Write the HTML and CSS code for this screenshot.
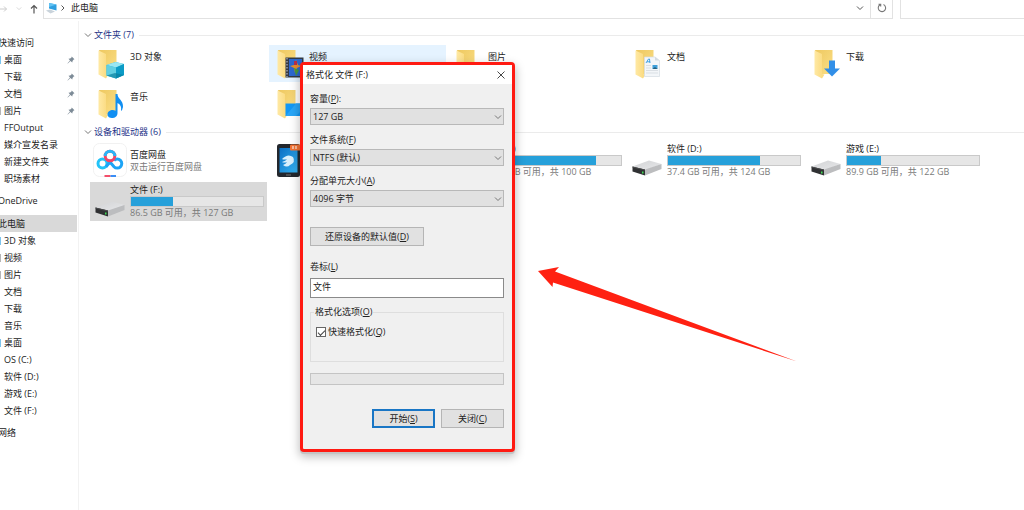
FILE: index.html
```html
<!DOCTYPE html>
<html lang="zh-CN">
<head>
<meta charset="utf-8">
<title>此电脑</title>
<link rel="stylesheet" href="styles.css">
</head>
<body>
<svg class="defs" aria-hidden="true">
  <defs>
    <linearGradient id="g-back" x1="0" y1="0" x2="1" y2="1"><stop offset="0" stop-color="#eec860"/><stop offset="1" stop-color="#fbdf86"/></linearGradient>
    <linearGradient id="g-front" x1="0" y1="0" x2="1" y2="0"><stop offset="0" stop-color="#ffe9a4"/><stop offset="1" stop-color="#fbdc84"/></linearGradient>
    <linearGradient id="g-top" x1="0" y1="0" x2="1" y2="1"><stop offset="0" stop-color="#d2d3d5"/><stop offset="1" stop-color="#e6e7e9"/></linearGradient>
    <linearGradient id="g-phone" x1="0" y1="0" x2="1" y2="1"><stop offset="0" stop-color="#0b6fc4"/><stop offset="1" stop-color="#35b3f2"/></linearGradient>
    <symbol id="folder" viewBox="0 0 30 32">
      <path d="M2 2H19.500V26H8Z" fill="url(#g-back)"/>
      <path d="M1.500 2.500 9 6V30.500L1.500 26.500Z" fill="url(#g-front)"/>
      <path d="M9 26 11.500 26.500 9 30.500Z" fill="#fbdc84"/>
    </symbol>
    <symbol id="drive" viewBox="0 0 30 16">
      <path d="M0.500 6.500 17 .5 29.500 4 15 9.500Z" fill="url(#g-top)"/>
      <path d="M13 9.500 29.500 4V9L13 15.500Z" fill="#bcbdbf"/>
      <path d="M0.500 6.500 13 9.500V15.500L0.500 11.500Z" fill="#303133"/>
      <path d="M0.500 6.500 13 9.500V10.500L0.500 7.500Z" fill="#4b4c4e"/>
      <rect x="10" y="11.500" width="1.500" height="2" fill="#3ddc53"/>
    </symbol>
    <symbol id="down" viewBox="0 0 8 6"><path d="M1 1.500 4 4.500 7 1.500" fill="none" stroke="currentColor" stroke-width="1"/></symbol>
    <symbol id="pin" viewBox="0 0 8 8"><path d="M4.700.5 7.500 3.300 6.700 3.600 5.500 5 5.300 6.500 3.400 4.900.8 7.500.5 7.200 3 4.500 1.500 2.800 3.200 2.600 4.500 1.400Z" fill="#7d8b97"/></symbol>
  </defs>
</svg>

<header class="toolbar">
  <div class="nav-buttons">
    <button class="plain faint" aria-label="前进"><svg width="8" height="10" viewBox="0 0 8 10"><path d="M0 5H6.500M4 2.500 6.500 5 4 7.500" fill="none" stroke="currentColor"/></svg></button>
    <button class="plain faint" aria-label="最近位置"><svg width="6" height="5"><use href="#down"/></svg></button>
    <button class="plain" aria-label="向上"><svg width="8" height="10" viewBox="0 0 8 10"><path d="M4 9.500V1.500M1 4.500 4 1.500 7 4.500" fill="none" stroke="currentColor" stroke-width="1.200"/></svg></button>
  </div>
  <div class="address">
    <svg width="12" height="12" viewBox="0 0 12 12"><path d="M3 1 10.500 2.500V8.500L3 6.500Z" fill="#2f9fe0"/><path d="M3 1 10.500 2.500 3 5Z" fill="#63c3f3"/><path d="M0 8.500 4 7.500 9 9.500 4.500 11.500Z" fill="#c9d3db"/></svg>
    <svg width="6" height="8" viewBox="0 0 6 8"><path d="M1.500 1.500 4 4 1.500 6.500" fill="none" stroke="#555"/></svg>
    <span class="crumb">此电脑</span>
    <button class="plain" aria-label="展开地址"><svg width="8" height="6"><use href="#down"/></svg></button>
  </div>
  <button class="refresh" aria-label="刷新"><svg width="10" height="10" viewBox="0 0 10 10"><path d="M6.500 1.600A3.700 3.700 0 1 1 3 1.800M1.500 1.200H3.700V3.400" fill="none" stroke="#777" stroke-width="1.100"/></svg></button>
  <input class="search" type="text" aria-label="搜索">
</header>

<div class="columns">
  <nav class="sidebar">
    <a class="root" href="#">快速访问</a>
    <a href="#"><i class="edge blue"></i>桌面<svg class="pin"><use href="#pin"/></svg></a>
    <a href="#"><i class="edge"></i>下载<svg class="pin"><use href="#pin"/></svg></a>
    <a href="#"><i class="edge"></i>文档<svg class="pin"><use href="#pin"/></svg></a>
    <a href="#"><i class="edge gray"></i>图片<svg class="pin"><use href="#pin"/></svg></a>
    <a href="#"><i class="edge"></i>FFOutput</a>
    <a href="#"><i class="edge"></i>媒介宣发名录</a>
    <a href="#"><i class="edge"></i>新建文件夹</a>
    <a href="#"><i class="edge"></i>职场素材</a>
    <a class="root spaced" href="#">OneDrive</a>
    <a class="root spaced current" href="#">此电脑</a>
    <a href="#"><i class="edge blue"></i>3D 对象</a>
    <a href="#"><i class="edge gray"></i>视频</a>
    <a href="#"><i class="edge gray"></i>图片</a>
    <a href="#"><i class="edge"></i>文档</a>
    <a href="#"><i class="edge"></i>下载</a>
    <a href="#"><i class="edge"></i>音乐</a>
    <a href="#"><i class="edge blue"></i>桌面</a>
    <a href="#"><i class="edge"></i>OS (C:)</a>
    <a href="#"><i class="edge"></i>软件 (D:)</a>
    <a href="#"><i class="edge"></i>游戏 (E:)</a>
    <a href="#"><i class="edge"></i>文件 (F:)</a>
    <a class="root spaced" href="#">网络</a>
  </nav>

  <main class="content">
    <h2 class="group"><svg width="8" height="6"><use href="#down"/></svg>文件夹 (7)</h2>
    <div class="tiles folders">
      <div class="tile">
        <svg class="icon" viewBox="0 0 30 32"><use href="#folder"/><path d="M9.500 17 18.500 14 27 16V27L19 30.500 9.500 27.500Z" fill="#27b4d6"/><path d="M9.500 17 18.500 14 27 16 19 19.500Z" fill="#9be7f2"/><path d="M9.500 17 19 19.500V30.500L9.500 27.500Z" fill="#62cfe2"/><path d="M19 19.500 27 16V27L19 30.500Z" fill="#0c9bc6"/><path d="M9.500 27.500 18 25 27 27 19 30.500Z" fill="#087f9f" opacity=".7"/></svg>
        <span>3D 对象</span>
      </div>
      <div class="tile hover">
        <svg class="icon" viewBox="0 0 30 32"><use href="#folder"/><rect x="9.500" y="9.500" width="18" height="20" fill="#333a45"/><rect x="13" y="11" width="13" height="17" fill="#2c68cf"/><path d="M11 10V29" stroke="#ccd" stroke-dasharray="1.500 1.500"/><path d="M20 12l2 5 3 1-4 2-2 5-1-5-4-2 4-1Z" fill="#e88c2c"/><path d="M18 13h3v4h-3z" fill="#b82f46"/><path d="M18 20 20 28 23 22Z" fill="#4b9a3a"/></svg>
        <span>视频</span>
      </div>
      <div class="tile">
        <svg class="icon" viewBox="0 0 30 32"><use href="#folder"/><path d="M10 14H28V28H10Z" fill="#6cc0ee"/><path d="M10 28 17 19 28 28Z" fill="#3c8650"/></svg>
        <span>图片</span>
      </div>
      <div class="tile">
        <svg class="icon" viewBox="0 0 30 32"><use href="#folder"/><path d="M10.500 9H21L25.500 12.500V28.500H10.500Z" fill="#f3f6f9" stroke="#d4dbe2" stroke-width=".7"/><path d="M21 9V12.500H25.500Z" fill="#d4dbe2"/><path d="M12 15 14.500 11H15.500L16 15M13 13.800H16" fill="none" stroke="#1b8fe0" stroke-width=".8"/><path d="M12 17.500H17M12 20H17M12 22.500H24M12 25H24" stroke="#cfd5db" stroke-width=".7"/><rect x="18.500" y="17" width="5" height="4" fill="#3f9fda"/><path d="M18.500 21 21 19 23.500 21Z" fill="#265f7c"/></svg>
        <span>文档</span>
      </div>
      <div class="tile">
        <svg class="icon" viewBox="0 0 30 32"><use href="#folder"/><path d="M16 12.500H22V20.500H27L19 28.500 11 20.500H16Z" fill="#318fe8"/></svg>
        <span>下载</span>
      </div>
      <div class="tile">
        <svg class="icon" viewBox="0 0 30 32"><use href="#folder"/><path d="M18.500 6H20.500C20.500 11 26.500 12 26 19Q25.500 22 24 23 25 17 20.500 15V25C20.500 31.500 10.500 31.500 10.500 26.500 10.500 22.500 15.500 21 18.500 22.800Z" fill="#118ff2"/></svg>
        <span>音乐</span>
      </div>
      <div class="tile">
        <svg class="icon" viewBox="0 0 30 32"><use href="#folder"/><path d="M9.500 15.500H28V28H9.500Z" fill="#1298f6"/><path d="M9.500 28 20 15.500H28V20L20 28Z" fill="#29a6f8"/></svg>
      </div>
    </div>

    <h2 class="group"><svg width="8" height="6"><use href="#down"/></svg>设备和驱动器 (6)</h2>
    <div class="tiles devices">
      <div class="tile">
        <svg class="icon tall" viewBox="0 0 34 36"><rect x=".5" y=".5" width="33" height="33" rx="6" fill="#fff" stroke="#f1f1f1"/><g fill="none" stroke-width="3"><circle cx="9.500" cy="20.500" r="4.500" stroke="#22c3f8"/><path d="M21 17.500A4.500 4.500 0 1 1 21 23.700L17 19 13 23.700" stroke="#1da4f6"/><circle cx="17" cy="13" r="4.800" stroke="#f24668"/><path d="M12.200 13A4.800 4.800 0 0 1 21.800 13" stroke="#2ab5f8"/></g><rect x="11.500" y="32" width="6" height="2" fill="#f34f6b"/><rect x="17.500" y="32" width="5.500" height="2" fill="#3a8df5"/></svg>
        <div class="info"><span>百度网盘</span><span class="sub">双击运行百度网盘</span></div>
      </div>
      <div class="tile">
        <svg class="icon tall" viewBox="0 0 34 36"><rect x="5" y="1" width="23" height="33" rx="2.500" fill="#23272d"/><rect x="7.500" y="5" width="18" height="24.500" fill="url(#g-phone)"/><path d="M10 16Q16 10 21 14 24 19 18 22 15 25 11 22 14 21 15 19 12 20 10 19 14 18 15 16 12 17 10 16Z" fill="#d9effc"/><path d="M14 32H19" stroke="#777"/><rect x="18" y="1.500" width="11" height="6" rx="1" fill="#f37333"/><path d="M21 3V6M24 3V6" stroke="#fff"/></svg>
      </div>
      <div class="tile">
        <svg class="icon disk"><use href="#drive"/></svg>
        <div class="info"><span>OS (C:)</span><div class="bar"><div style="width:81%"></div></div><span class="sub">18.8 GB 可用，共 100 GB</span></div>
      </div>
      <div class="tile">
        <svg class="icon disk"><use href="#drive"/></svg>
        <div class="info"><span>软件 (D:)</span><div class="bar"><div style="width:70%"></div></div><span class="sub">37.4 GB 可用，共 124 GB</span></div>
      </div>
      <div class="tile">
        <svg class="icon disk"><use href="#drive"/></svg>
        <div class="info"><span>游戏 (E:)</span><div class="bar"><div style="width:26%"></div></div><span class="sub">89.9 GB 可用，共 122 GB</span></div>
      </div>
      <div class="tile selected">
        <svg class="icon disk"><use href="#drive"/></svg>
        <div class="info"><span>文件 (F:)</span><div class="bar"><div style="width:32%"></div></div><span class="sub">86.5 GB 可用，共 127 GB</span></div>
      </div>
    </div>
  </main>
</div>

<form class="dialog" role="dialog" aria-labelledby="dialog-title">
  <div class="titlebar">
    <span id="dialog-title">格式化 文件 (F:)</span>
    <button type="button" class="plain" aria-label="关闭"><svg width="8" height="8" viewBox="0 0 8 8"><path d="M.5.5 7.500 7.500M7.500.5.5 7.500" stroke="#333" stroke-width=".9"/></svg></button>
  </div>
  <div class="body">
    <div class="field">
      <label for="capacity">容量(<u>P</u>):</label>
      <div class="combo"><select id="capacity"><option>127 GB</option></select><svg viewBox="0 0 8 6"><use href="#down"/></svg></div>
    </div>
    <div class="field">
      <label for="filesystem">文件系统(<u>F</u>)</label>
      <div class="combo"><select id="filesystem"><option>NTFS (默认)</option></select><svg viewBox="0 0 8 6"><use href="#down"/></svg></div>
    </div>
    <div class="field">
      <label for="unit">分配单元大小(<u>A</u>)</label>
      <div class="combo"><select id="unit"><option>4096 字节</option></select><svg viewBox="0 0 8 6"><use href="#down"/></svg></div>
    </div>
    <button type="button" class="push restore">还原设备的默认值(<u>D</u>)</button>
    <div class="field volume">
      <label for="volume">卷标(<u>L</u>)</label>
      <input id="volume" type="text" value="文件">
    </div>
    <fieldset>
      <legend>格式化选项(<u>O</u>)</legend>
      <div class="check"><input id="quick" type="checkbox" checked><label for="quick">快速格式化(<u>Q</u>)</label></div>
    </fieldset>
    <div class="progress" role="progressbar" aria-label="格式化进度"></div>
    <div class="actions">
      <button type="button" class="push primary">开始(<u>S</u>)</button>
      <button type="button" class="push">关闭(<u>C</u>)</button>
    </div>
  </div>
</form>

<svg class="pointer" width="260" height="96" viewBox="0 0 260 96" aria-hidden="true"><path d="M0 5 21 1 17 5.500 259 95.500 15 16.500 14.500 21Z" fill="#ff2112"/></svg>
</body>
</html>
```

FILE: styles.css
```css
* { box-sizing: border-box; }

body {
  margin: 0;
  min-height: 100vh;
  display: flex;
  flex-direction: column;
  position: relative;
  overflow: hidden;
  background: #fff;
  color: #222;
  font: 9px/12px "Open Sans", "Noto Sans CJK SC", sans-serif;
}

button, input, select { font: inherit; color: inherit; margin: 0; }
svg { display: block; flex: none; }
u { text-underline-offset: 1px; text-decoration-thickness: 1px; }
.defs { position: absolute; width: 0; height: 0; }

.plain { border: 0; background: none; padding: 0; color: #555; }
.faint { color: #ccc; }

/* Toolbar */
.toolbar { display: flex; height: 19px; margin-bottom: 2px; }
.nav-buttons { display: flex; align-items: center; justify-content: space-between; width: 43px; padding: 0 5px 2px 0; }
.address {
  flex: 1;
  display: flex;
  align-items: center;
  gap: 2px;
  padding: 0 6px 2px 2px;
  border: solid #e2e2e2;
  border-width: 0 1px 1px;
}
.crumb { flex: 1; padding-left: 3px; }
.refresh {
  width: 22px;
  display: flex;
  align-items: center;
  justify-content: center;
  padding: 0 0 2px;
  background: #fff;
  border: solid #e2e2e2;
  border-width: 0 1px 1px 0;
}
.search {
  width: 124px;
  margin-left: 7px;
  background: #fff;
  border: solid #e2e2e2;
  border-width: 0 0 1px 1px;
}

.columns { flex: 1; display: flex; }

/* Navigation pane */
.sidebar {
  width: 79px;
  padding: 13px 1px 0 0;
  border-right: 1px solid #f2f2f2;
  overflow: hidden;
}
.sidebar a {
  display: flex;
  align-items: center;
  height: 17px;
  color: inherit;
  text-decoration: none;
  white-space: nowrap;
}
.sidebar .root { text-indent: -2px; }
.sidebar .spaced { margin-top: 5px; }
.sidebar .current { margin-top: 6px; background: #d9d9d9; }
.edge { width: 1px; height: 8px; margin-right: 3px; }
.edge.blue { background: #7cc4ee; }
.edge.gray { background: #b5b5b5; }
.pin { width: 8px; height: 8px; margin: 0 2px 0 auto; }

/* File area */
.content { flex: 1; padding: 8px 0 0 5px; }
.group {
  display: flex;
  align-items: center;
  gap: 2px;
  height: 12px;
  margin: 0;
  color: #1e3287;
  font: inherit;
}
.group svg { color: #777; }
.group::after { content: ""; flex: 1; height: 1px; margin-left: 3px; background: #ebebeb; }
.tiles {
  display: grid;
  grid-template-columns: repeat(auto-fill, 177px);
  column-gap: 2px;
  padding-left: 6px;
}
.folders { grid-auto-rows: 37px; row-gap: 3px; padding-top: 4px; margin-bottom: 4px; }
.devices { grid-auto-rows: 39px; row-gap: 2px; padding-top: 3px; }
.tile { display: flex; padding-left: 7px; white-space: nowrap; }
.folders .tile { gap: 3px; }
.folders .tile span { padding-top: 6px; }
.folders .icon { width: 30px; height: 32px; margin-top: 3px; }
.hover { background: #e5f3ff; }
.selected { background: #d9d9d9; }
.devices .tile { align-items: center; gap: 3px; padding-left: 3px; }
.icon.tall { width: 34px; height: 36px; }
.icon.disk { width: 30px; height: 16px; margin: 14px 2px 0; }
.tile .info { display: flex; flex-direction: column; width: 134px; }
.sub { color: #7a7a7a; }
.bar { height: 11px; border: 1px solid #c9c9c9; background: #e6e6e6; }
.bar div { height: 100%; background: #26a0da; }

/* Format dialog */
.dialog {
  position: absolute;
  left: 300px;
  top: 62px;
  width: 215px;
  border: 3px solid #ff1a12;
  border-radius: 4px;
  background: #f0f0f0;
  box-shadow: 0 2px 0 #c4c4c4, 0 4px 10px 1px rgba(0, 0, 0, .25);
}
.titlebar {
  display: flex;
  align-items: center;
  justify-content: space-between;
  height: 19px;
  padding: 0 7px 0 3px;
  background: #fff;
}
.body { display: flex; flex-direction: column; padding: 9px 8px 21px 7px; }
.field { display: flex; flex-direction: column; gap: 3px; margin-bottom: 9px; }
.combo { display: grid; align-items: center; }
.combo select, .combo svg { grid-area: 1 / 1; }
.combo svg { width: 8px; height: 6px; justify-self: end; margin-right: 2px; color: #777; pointer-events: none; }
.combo select {
  appearance: none;
  height: 17px;
  padding: 0 2px;
  border: 1px solid #b8b8b8;
  border-radius: 0;
  background: #e1e1e1;
}
.push {
  height: 19px;
  width: 63px;
  padding: 0;
  border: 1px solid #b5b5b5;
  background: #e1e1e1;
}
.restore { width: 114px; margin: 11px 0 15px; }
.volume { gap: 5px; margin-bottom: 8px; }
.volume input {
  height: 20px;
  padding: 0 2px 3px;
  border: 1px solid #8a8a8a;
  background: #fff;
}
fieldset {
  height: 56px;
  margin: 0 0 11px;
  padding: 8px 5px 0;
  border: 1px solid #dedede;
}
legend { padding: 0 1px; margin-left: -2px; }
.check { display: flex; align-items: center; gap: 2px; }
.check input {
  appearance: none;
  width: 10px;
  height: 10px;
  border: 1px solid #666;
  background: #fff;
  display: grid;
  place-items: center;
}
.check input:checked::before {
  content: "";
  width: 6px;
  height: 3px;
  border: solid #444;
  border-width: 0 0 1px 1px;
  transform: rotate(-45deg);
}
.progress { height: 12px; margin-bottom: 24px; border: 1px solid #c4c4c4; background: #e6e6e6; }
.actions { display: flex; justify-content: flex-end; gap: 6px; }
.primary { border: 2px solid #1976c5; }

.pointer { position: absolute; left: 538px; top: 266px; }
```
